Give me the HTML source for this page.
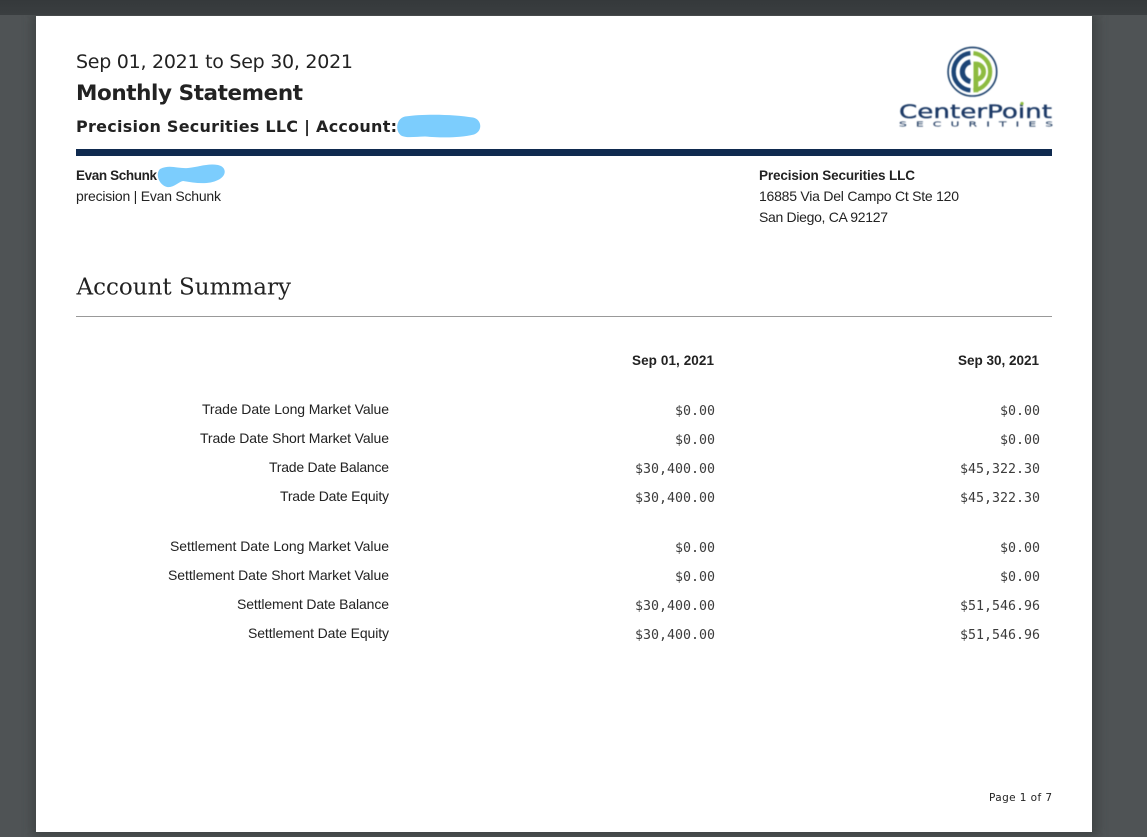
<!DOCTYPE html>
<html><head><meta charset="utf-8"><style>
html,body{margin:0;padding:0;width:1147px;height:837px;overflow:hidden;background:#4f5355}
svg{display:block}
text{fill:#222;font-family:"Liberation Sans",sans-serif;font-size:14px}
.d{font-family:"DejaVu Sans",sans-serif}
.b{font-weight:bold}
.m{font-family:"DejaVu Sans Mono",monospace;font-size:13.3px;fill:#3c3c3c}
</style></head><body>
<svg width="1147" height="837" viewBox="0 0 1147 837" xmlns="http://www.w3.org/2000/svg">
<defs>
<linearGradient id="t" x1="0" y1="0" x2="0" y2="1"><stop offset="0" stop-color="#35393b"/><stop offset="1" stop-color="#3a3e40"/></linearGradient>
<filter id="s" x="-5%" y="-5%" width="110%" height="110%"><feGaussianBlur stdDeviation="5"/></filter>
<filter id="bl" x="-5%" y="-5%" width="110%" height="110%"><feGaussianBlur stdDeviation="0.4"/></filter>
</defs>
<rect width="1147" height="837" fill="#4f5355"/>
<rect x="32" y="14" width="1066" height="823" fill="#3b3f41" opacity=".75" filter="url(#s)"/>
<rect width="1147" height="15" fill="url(#t)"/>
<rect x="36" y="16" width="1056" height="816" fill="#fff"/>

<text class="d" x="76" y="68" style="font-size:19px" textLength="277">Sep 01, 2021 to Sep 30, 2021</text>
<text class="d b" x="76" y="100" style="font-size:21.5px" textLength="227">Monthly Statement</text>
<text class="d b" x="76" y="132" style="font-size:16px" textLength="321">Precision Securities LLC | Account:</text>
<path d="M405 116.5C425 113.5 455 114.5 473 117.5C482 119.500 483 131 474 134.500C458 138.500 438 137.500 425 136.500C416 136.500 406 138.500 401 135.500C395 131 396 118.500 405 116.500Z" fill="#7ccdfd"/>

<rect x="76" y="149" width="976" height="7" fill="#0f2a4f"/>

<text class="b" x="76" y="180" style="font-size:13.5px" textLength="81">Evan Schunk</text>
<path d="M160 169C170 164 178 169 188 168C198 167 208 163 218 165C227 167 227 176 218 180C208 185 195 183 183 181C178 182 174 188 167 187C159 185 155 174 160 169Z" fill="#7ccdfd"/>
<text x="76" y="201" textLength="145">precision | Evan Schunk</text>
<text class="b" x="759" y="180" style="font-size:13.5px" textLength="156">Precision Securities LLC</text>
<text x="759" y="201" textLength="200">16885 Via Del Campo Ct Ste 120</text>
<text x="759" y="222" textLength="129">San Diego, CA 92127</text>

<text x="76.500" y="294.5" style="font-family:'DejaVu Serif',serif;font-size:23px" textLength="214.500" lengthAdjust="spacingAndGlyphs">Account Summary</text>
<rect x="76" y="316" width="976" height="1" fill="#999"/>

<text class="b" x="632" y="365" style="font-size:13.5px" textLength="82">Sep 01, 2021</text>
<text class="b" x="958" y="365" style="font-size:13.5px" textLength="81">Sep 30, 2021</text>

<text x="202" y="414" textLength="187">Trade Date Long Market Value</text>
<text x="200" y="443" textLength="189">Trade Date Short Market Value</text>
<text x="269" y="472" textLength="120">Trade Date Balance</text>
<text x="280" y="501" textLength="109">Trade Date Equity</text>
<text x="170" y="551" textLength="219">Settlement Date Long Market Value</text>
<text x="168" y="580" textLength="221">Settlement Date Short Market Value</text>
<text x="237" y="609" textLength="152">Settlement Date Balance</text>
<text x="248" y="638" textLength="141">Settlement Date Equity</text>

<text class="m" x="675" y="415">$0.00</text><text class="m" x="1000" y="415">$0.00</text>
<text class="m" x="675" y="444">$0.00</text><text class="m" x="1000" y="444">$0.00</text>
<text class="m" x="635" y="473">$30,400.00</text><text class="m" x="960" y="473">$45,322.30</text>
<text class="m" x="635" y="502">$30,400.00</text><text class="m" x="960" y="502">$45,322.30</text>
<text class="m" x="675" y="552">$0.00</text><text class="m" x="1000" y="552">$0.00</text>
<text class="m" x="675" y="581">$0.00</text><text class="m" x="1000" y="581">$0.00</text>
<text class="m" x="635" y="610">$30,400.00</text><text class="m" x="960" y="610">$51,546.96</text>
<text class="m" x="635" y="639">$30,400.00</text><text class="m" x="960" y="639">$51,546.96</text>

<text class="d" x="989" y="801" style="font-size:10.5px" textLength="63">Page 1 of 7</text>

<g filter="url(#bl)">
<g transform="translate(972.4 71.7)" fill="none">
<circle r="24.3" stroke="#1b3f6b" stroke-width="1.6"/>
<path d="M-2 -18.6A18.7 18.7 0 0 0 -2 18.6" stroke="#1a4576" stroke-width="4.4"/>
<path d="M-2 -9.8A10 10 0 0 0 -2 9.8" stroke="#1a4576" stroke-width="5.2"/>
<path d="M1 -18.6A18.7 18.7 0 0 1 1 18.6" stroke="#8dbb3f" stroke-width="4.2"/>
<path d="M3.5 20.5V-7.7A7.7 7.7 0 0 1 3.5 7.7" stroke="#8dbb3f" stroke-width="4.8"/>
</g>
<text class="d" x="899" y="118" style="font-size:19px;fill:#1c3a66;stroke:#1c3a66;stroke-width:.35" textLength="153" lengthAdjust="spacingAndGlyphs">CenterPoint</text>
<circle cx="1022" cy="103.5" r="1.6" fill="#8dbb3f"/>
<text class="d" transform="translate(899 126.3) scale(1.7 1)" x="0" y="0" style="font-size:7.2px;fill:#2a4468;stroke:#2a4468;stroke-width:.15" textLength="90.6">SECURITIES</text>
</g>
</svg>
</body></html>
